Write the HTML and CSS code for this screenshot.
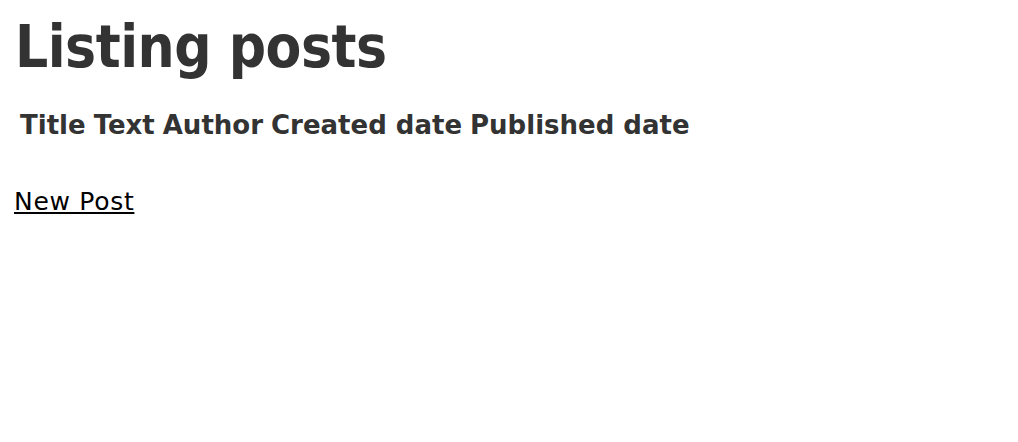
FILE: index.html
```html
<!DOCTYPE html>
<html>
<head>
<meta charset="utf-8">
<title>Posts</title>
<link rel="stylesheet" href="styles.css">
</head>
<body>
<h1 class="page-title">Listing posts</h1>
<table class="posts">
  <thead>
    <tr>
      <th>Title</th>
      <th>Text</th>
      <th>Author</th>
      <th>Created date</th>
      <th>Published date</th>
    </tr>
  </thead>
  <tbody></tbody>
</table>
<p class="actions"><a class="new-link" href="#">New Post</a></p>
</body>
</html>
```
FILE: styles.css
```css
body {
  margin: 0;
  padding: 0 14px;
  background: #fff;
  color: #333;
  font-family: "DejaVu Sans", Verdana, sans-serif;
}
.page-title {
  margin: 15px 0 0 1px;
  font-family: "DejaVu Sans Condensed", "DejaVu Sans", sans-serif;
  font-size: 58px;
  line-height: 64px;
  font-weight: bold;
  letter-spacing: -0.5px;
}
.posts {
  border-collapse: separate;
  border-spacing: 2px;
  margin: 28px 0 0 1px;
}
.posts th {
  font-size: 26px;
  line-height: 30px;
  font-weight: bold;
  padding: 1px 3px;
  text-align: center;
}
.actions {
  margin: 44px 0 0;
}
.new-link {
  display: inline-block;
  color: #000;
  font-size: 25px;
  line-height: 30px;
  letter-spacing: 0.7px;
}
```
